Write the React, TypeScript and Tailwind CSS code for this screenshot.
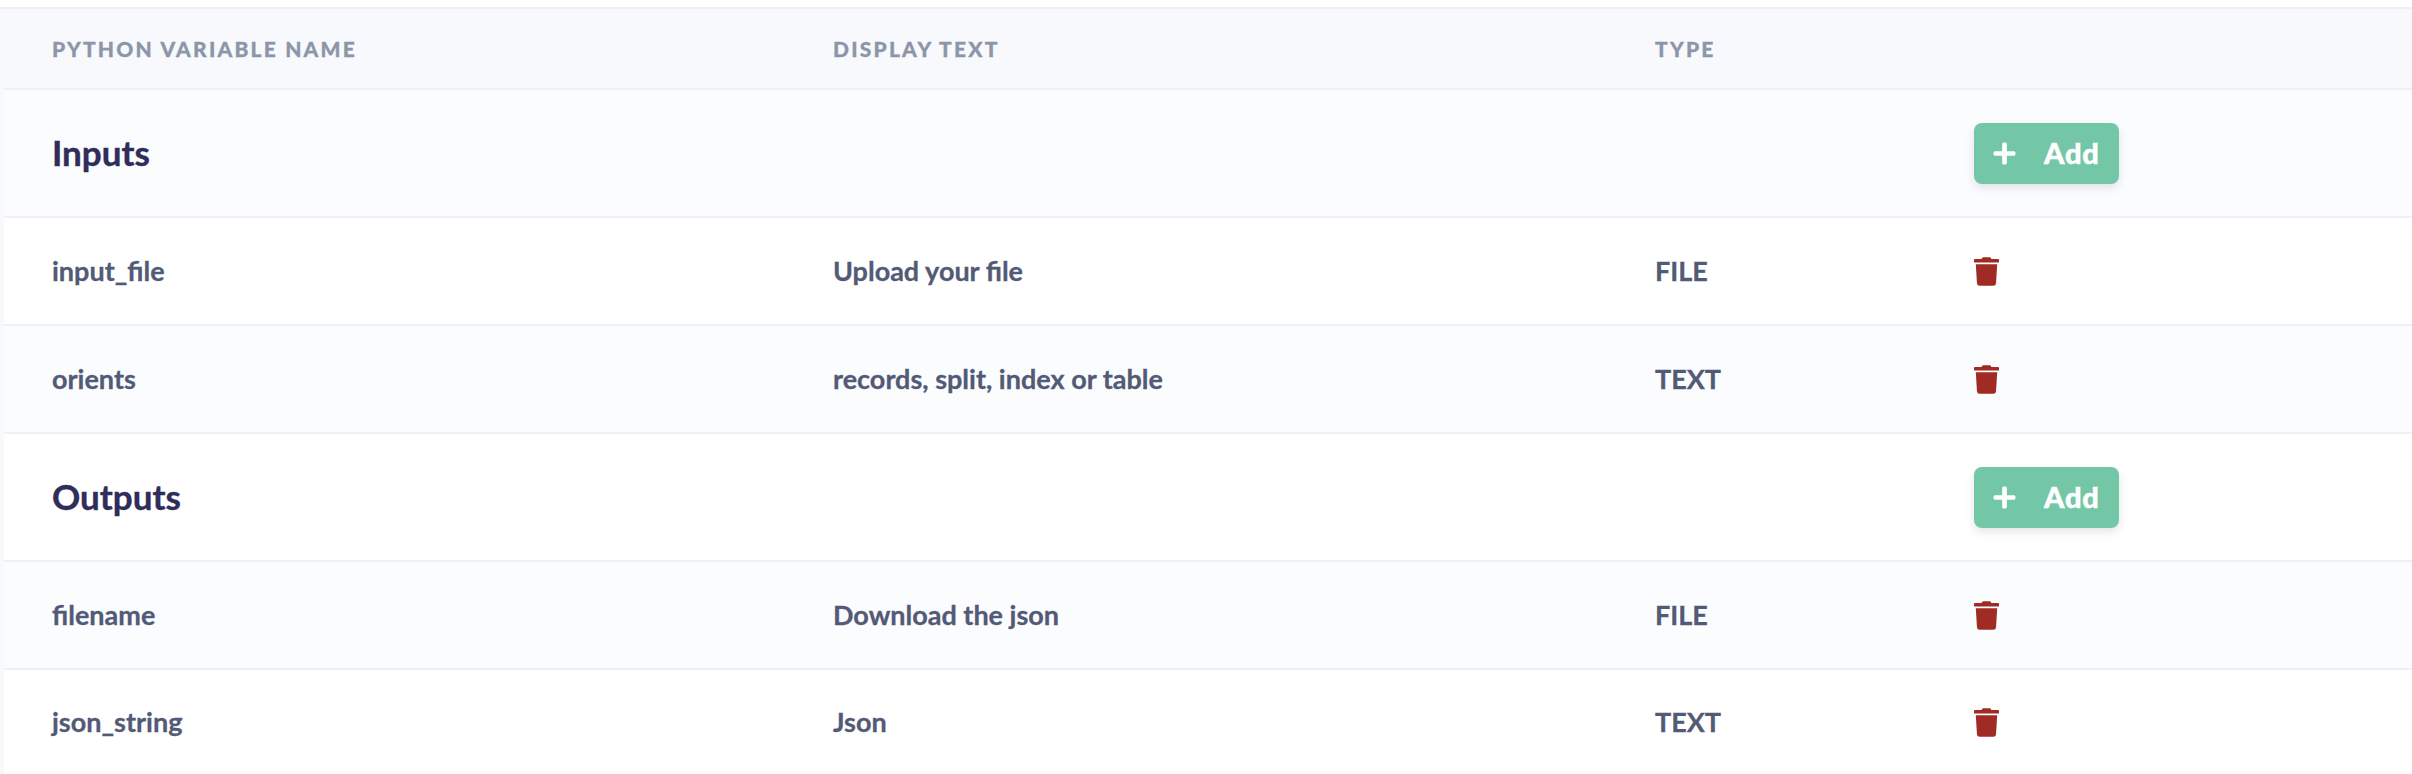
import { FaPlus, FaTrash } from "react-icons/fa";

const cols = "grid grid-cols-[781px_822px_319px_1fr] items-center pl-12";

function Section({ title, bg }: { title: string; bg: string }) {
  return (
    <div className={`${cols} h-[128px] border-b-2 border-[#eef0f4] ${bg}`}>
      <div className="col-span-3 -mt-[2px] text-[35px] font-bold text-[#2f2d5a] [-webkit-text-stroke:0.4px]">{title}</div>
      <div>
        <button className="flex h-[61px] w-[145px] items-center rounded-lg bg-[#73c6a6] pl-[18px] text-[29px] font-black tracking-[0.03em] text-white shadow-[0_4px_8px_rgba(60,70,100,0.14)] [-webkit-text-stroke:0.5px]">
          <FaPlus className="h-[25px] w-[25px]" />
          <span className="ml-[27px]">Add</span>
        </button>
      </div>
    </div>
  );
}

function Row({ name, text, type, bg, last }: { name: string; text: string; type: string; bg: string; last?: boolean }) {
  return (
    <div className={`${cols} ${last ? "h-[104px]" : "h-[108px] border-b-2 border-[#eef0f4]"} ${bg} text-[27px] font-bold text-[#525a76] [-webkit-text-stroke:0.3px]`}>
      <div>{name}</div>
      <div>{text}</div>
      <div>{type}</div>
      <div>
        <FaTrash className="h-[29px] w-[25px] text-[#a02b25]" />
      </div>
    </div>
  );
}

export default function App() {
  return (
    <div className="h-[774px] w-[2412px] overflow-hidden bg-white font-['Lato',sans-serif]">
      <div className="h-[9px] border-b-2 border-[#eef0f4]" />
      <div className="ml-0 border-l-4 border-[#f7f9fc]">
        <div className={`${cols} h-[81px] border-b-2 border-[#eef0f4] bg-[#f7f9fc] text-[21px] font-black tracking-[0.105em] text-[#8d96a8] [-webkit-text-stroke:0.3px]`}>
          <div>PYTHON VARIABLE NAME</div>
          <div>DISPLAY TEXT</div>
          <div>TYPE</div>
          <div />
        </div>
        <Section title="Inputs" bg="bg-[#fbfcfe]" />
        <Row name="input_file" text="Upload your file" type="FILE" bg="bg-white" />
        <Row name="orients" text="records, split, index or table" type="TEXT" bg="bg-[#fbfcfe]" />
        <Section title="Outputs" bg="bg-white" />
        <Row name="filename" text="Download the json" type="FILE" bg="bg-[#fbfcfe]" />
        <Row name="json_string" text="Json" type="TEXT" bg="bg-white" last />
      </div>
    </div>
  );
}
